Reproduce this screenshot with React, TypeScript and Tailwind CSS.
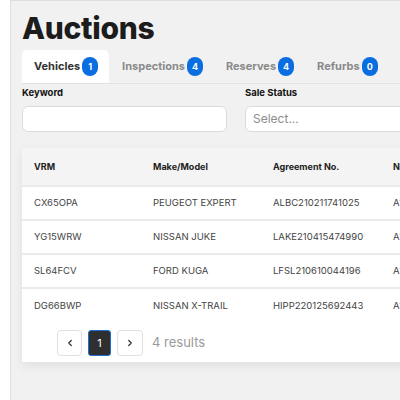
import React from "react";

const tabs = [
  { label: "Vehicles", count: 1, active: true },
  { label: "Inspections", count: 4 },
  { label: "Reserves", count: 4 },
  { label: "Refurbs", count: 0 },
];

const rows = [
  { vrm: "CX65OPA", model: "PEUGEOT EXPERT", agreement: "ALBC210211741025" },
  { vrm: "YG15WRW", model: "NISSAN JUKE", agreement: "LAKE210415474990" },
  { vrm: "SL64FCV", model: "FORD KUGA", agreement: "LFSL210610044196" },
  { vrm: "DG66BWP", model: "NISSAN X-TRAIL", agreement: "HIPP220125692443" },
];

const App: React.FC = () => {
  return (
    <div
      className="flex h-[400px] w-[400px] overflow-hidden bg-white"
      style={{ fontFamily: "Inter, 'Noto Sans', sans-serif" }}
    >
      <div className="w-[10px] shrink-0 bg-white" />
      <div className="flex-1 overflow-hidden border-l border-t border-[#dedede] bg-[#f1f1f1] pl-[11px] pt-[7px]">
        <h1 className="text-[30px] font-extrabold leading-[40px] tracking-[-0.3px] text-[#1c1c1c]">
          Auctions
        </h1>

        <div className="mt-[2px] flex w-[600px] border-b border-[#e2e2e2]">
          {tabs.map((t) => (
            <div
              key={t.label}
              className={
                t.active
                  ? "flex h-[33px] items-center gap-[2px] rounded-t-[5px] bg-white pl-[12px] pr-[11px]"
                  : "flex h-[33px] items-center gap-[2px] pl-[13px] pr-[10px]"
              }
            >
              <span
                className={
                  t.active
                    ? "text-[11px] font-bold text-[#333]"
                    : "text-[11px] font-bold text-[#8a8a8a]"
                }
              >
                {t.label}
              </span>
              <span className="flex h-[19px] w-[16px] items-center justify-center rounded-full bg-[#0b6ee0] text-[9px] font-bold text-white">
                {t.count}
              </span>
            </div>
          ))}
        </div>

        <div className="mt-[1px] flex gap-[18px]">
          <div className="w-[205px] shrink-0">
            <div className="text-[9.5px] font-bold leading-[16px] text-[#111]">Keyword</div>
            <div className="mt-[5px] h-[26px] rounded-[6px] border border-[#dcdcdc] bg-white" />
          </div>
          <div className="w-[200px] shrink-0">
            <div className="text-[9.5px] font-bold leading-[16px] text-[#111]">Sale Status</div>
            <div className="mt-[5px] flex h-[26px] items-center rounded-[6px] border border-[#dcdcdc] bg-white pl-[7px] text-[12px] text-[#8c8c8c]">
              Select...
            </div>
          </div>
        </div>

        <div className="mt-[16px] w-[500px] bg-white pb-[6px] shadow-[0_4px_10px_rgba(0,0,0,0.07)]">
          <div className="flex h-[39px] items-center border-b-2 border-[#ebebeb] bg-[#f4f4f4] text-[9px] font-bold text-[#222]">
            <div className="w-[131px] pl-[12px]">VRM</div>
            <div className="w-[120px]">Make/Model</div>
            <div className="w-[120px]">Agreement No.</div>
            <div className="w-[100px]">No.</div>
          </div>
          {rows.map((r, i) => (
            <div
              key={r.vrm}
              className={
                i < rows.length - 1
                  ? "flex h-[34px] items-center border-b-2 border-[#ebebeb] text-[9.5px] text-[#444]"
                  : "flex h-[34px] items-center text-[9.5px] text-[#444]"
              }
            >
              <div className="w-[131px] pl-[12px]">{r.vrm}</div>
              <div className="w-[120px]">{r.model}</div>
              <div className="w-[120px]">{r.agreement}</div>
              <div className="w-[100px]">A1</div>
            </div>
          ))}
          <div className="flex items-center gap-[6px] pl-[35px] pt-[7px]">
            <button className="flex h-[26px] w-[25px] items-center justify-center rounded-[4px] border border-[#e0e0e0] bg-white text-[#333]">
              <svg width="10" height="10" viewBox="0 0 24 24" fill="none" stroke="currentColor" strokeWidth="3" strokeLinecap="round" strokeLinejoin="round">
                <path d="M15 18l-6-6 6-6" />
              </svg>
            </button>
            <button className="flex h-[26px] w-[23px] items-center justify-center rounded-[3px] border border-[#1a6fd8] bg-[#2f2f2f] text-[11px] text-white">
              1
            </button>
            <button className="flex h-[26px] w-[26px] items-center justify-center rounded-[4px] border border-[#e0e0e0] bg-white text-[#333]">
              <svg width="10" height="10" viewBox="0 0 24 24" fill="none" stroke="currentColor" strokeWidth="3" strokeLinecap="round" strokeLinejoin="round">
                <path d="M9 18l6-6-6-6" />
              </svg>
            </button>
            <span className="ml-[3px] text-[13px] text-[#9a9a9a]">4 results</span>
          </div>
        </div>
      </div>
    </div>
  );
};

export default App;
